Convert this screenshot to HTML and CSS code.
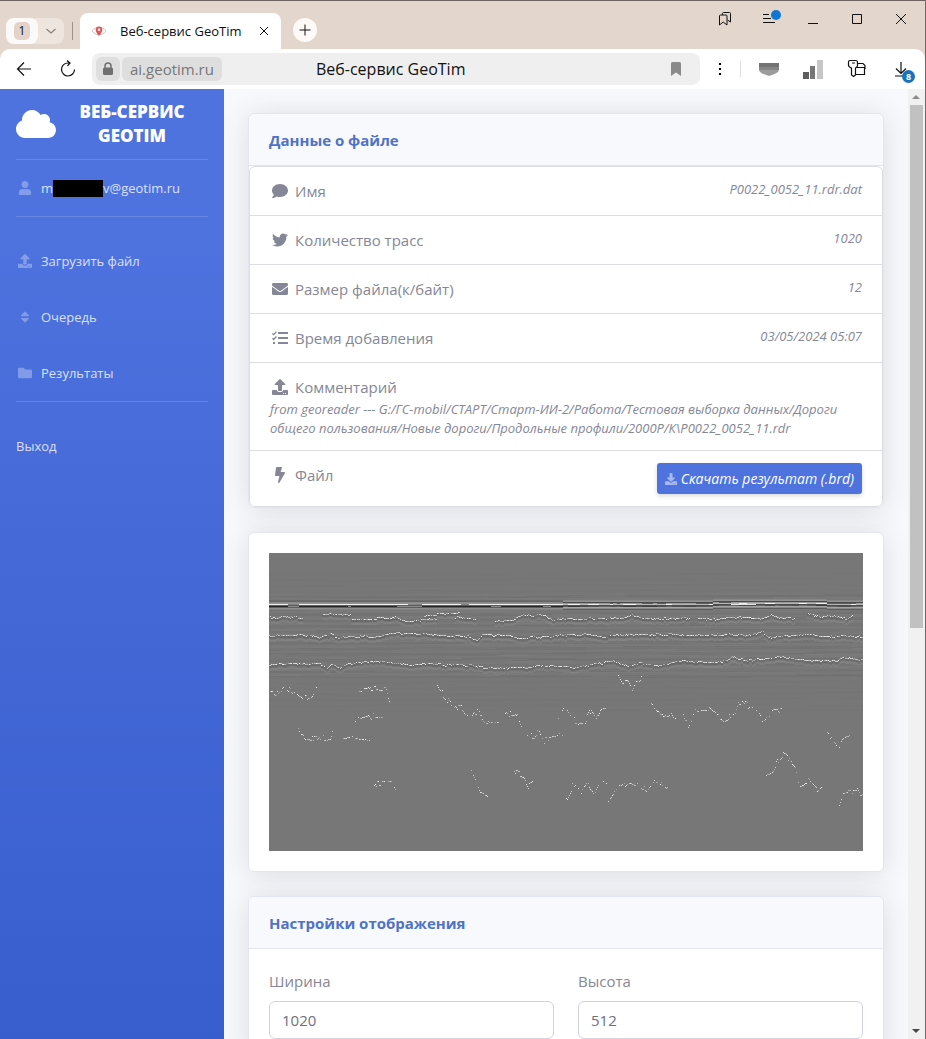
FILE: index.html
```html
<!DOCTYPE html>
<html lang="ru">
<head>
<meta charset="utf-8">
<title>Веб-сервис GeoTim</title>
<link rel="stylesheet" href="styles.css">
</head>
<body>
<svg class="sprite" aria-hidden="true">
  <symbol id="i-cloud" viewBox="0 0 640 512"><path d="M537.6 226.6c4.1-10.7 6.4-22.4 6.4-34.6 0-53-43-96-96-96-19.7 0-38.1 6-53.3 16.2C367 64.2 315.3 32 256 32c-88.4 0-160 71.6-160 160 0 2.7.1 5.4.2 8.1C40.2 219.8 0 273.2 0 336c0 79.5 64.5 144 144 144h368c70.7 0 128-57.3 128-128 0-61.9-44-113.6-102.4-125.4z"/></symbol>
  <symbol id="i-user" viewBox="0 0 448 512"><path d="M224 256c70.7 0 128-57.3 128-128S294.7 0 224 0 96 57.3 96 128s57.3 128 128 128zm89.6 32h-16.7c-22.2 10.2-46.9 16-72.9 16s-50.6-5.8-72.9-16h-16.7C60.2 288 0 348.2 0 422.4V464c0 26.5 21.5 48 48 48h352c26.5 0 48-21.5 48-48v-41.6c0-74.2-60.2-134.4-134.4-134.4z"/></symbol>
  <symbol id="i-upload" viewBox="0 0 512 512"><path d="M296 384h-80c-13.3 0-24-10.7-24-24V192h-87.7c-17.8 0-26.7-21.5-14.1-34.1L242.3 5.7c7.5-7.5 19.8-7.5 27.3 0l152.2 152.2c12.6 12.6 3.7 34.1-14.1 34.1H320v168c0 13.3-10.7 24-24 24zm216-8v112c0 13.3-10.7 24-24 24H24c-13.3 0-24-10.7-24-24V376c0-13.3 10.7-24 24-24h136v8c0 30.9 25.1 56 56 56h80c30.9 0 56-25.1 56-56v-8h136c13.3 0 24 10.7 24 24zm-124 88c0-11-9-20-20-20s-20 9-20 20 9 20 20 20 20-9 20-20zm64 0c0-11-9-20-20-20s-20 9-20 20 9 20 20 20 20-9 20-20z"/></symbol>
  <symbol id="i-download" viewBox="0 0 512 512"><path d="M216 0h80c13.3 0 24 10.7 24 24v168h87.7c17.8 0 26.7 21.5 14.1 34.1L269.7 378.3c-7.5 7.5-19.8 7.5-27.3 0L90.1 226.1c-12.6-12.6-3.7-34.1 14.1-34.1H192V24c0-13.3 10.7-24 24-24zm296 376v112c0 13.3-10.7 24-24 24H24c-13.3 0-24-10.7-24-24V376c0-13.3 10.7-24 24-24h146.7l49 49c20.1 20.1 52.5 20.1 72.6 0l49-49H488c13.3 0 24 10.7 24 24zm-124 88c0-11-9-20-20-20s-20 9-20 20 9 20 20 20 20-9 20-20zm64 0c0-11-9-20-20-20s-20 9-20 20 9 20 20 20 20-9 20-20z"/></symbol>
  <symbol id="i-sort" viewBox="0 0 320 512"><path d="M41 288h238c21.4 0 32.1 25.9 17 41L177 448c-9.4 9.4-24.6 9.4-33.9 0L24 329c-15.1-15.1-4.4-41 17-41zm255-105L177 64c-9.4-9.4-24.6-9.4-33.9 0L24 183c-15.1 15.1-4.4 41 17 41h238c21.4 0 32.1-25.9 17-41z"/></symbol>
  <symbol id="i-folder" viewBox="0 0 512 512"><path d="M464 128H272l-64-64H48C21.49 64 0 85.49 0 112v288c0 26.51 21.49 48 48 48h416c26.51 0 48-21.49 48-48V176c0-26.51-21.49-48-48-48z"/></symbol>
  <symbol id="i-comment" viewBox="0 0 512 512"><path d="M256 32C114.6 32 0 125.1 0 240c0 49.6 21.4 95 57 130.7C44.5 421.1 2.7 466 2.2 466.5c-2.2 2.3-2.8 5.7-1.5 8.7S4.8 480 8 480c66.3 0 116-31.8 140.6-51.4 32.7 12.3 69 19.4 107.4 19.4 141.4 0 256-93.1 256-208S397.4 32 256 32z"/></symbol>
  <symbol id="i-twitter" viewBox="0 0 512 512"><path d="M459.37 151.716c.325 4.548.325 9.097.325 13.645 0 138.72-105.583 298.558-298.558 298.558-59.452 0-114.68-17.219-161.137-47.106 8.447.974 16.568 1.299 25.34 1.299 49.055 0 94.213-16.568 130.274-44.832-46.132-.975-84.792-31.188-98.112-72.772 6.498.974 12.995 1.624 19.818 1.624 9.421 0 18.843-1.3 27.614-3.573-48.081-9.747-84.143-51.98-84.143-102.985v-1.299c13.969 7.797 30.214 12.67 47.431 13.319-28.264-18.843-46.781-51.005-46.781-87.391 0-19.492 5.197-37.36 14.294-52.954 51.655 63.675 129.3 105.258 216.365 109.807-1.624-7.797-2.599-15.918-2.599-24.04 0-57.828 46.782-104.934 104.934-104.934 30.213 0 57.502 12.67 76.67 33.137 23.715-4.548 46.456-13.32 66.599-25.34-7.798 24.366-24.366 44.833-46.132 57.827 21.117-2.273 41.584-8.122 60.426-16.243-14.292 20.791-32.161 39.308-52.628 54.253z"/></symbol>
  <symbol id="i-envelope" viewBox="0 0 512 512"><path d="M502.3 190.8c3.9-3.1 9.7-.2 9.7 4.7V400c0 26.5-21.5 48-48 48H48c-26.5 0-48-21.5-48-48V195.6c0-5 5.7-7.8 9.7-4.7 22.4 17.4 52.1 39.5 154.1 113.6 21.1 15.4 56.7 47.8 92.2 47.6 35.7.3 72-32.8 92.3-47.6 102-74.1 131.6-96.3 154-113.7zM256 320c23.2.4 56.6-29.2 73.4-41.4 132.7-96.3 142.8-104.7 173.4-128.7 5.8-4.5 9.2-11.5 9.2-18.9v-19c0-26.5-21.5-48-48-48H48c-26.5 0-48 21.5-48 48v19c0 7.4 3.4 14.3 9.2 18.9 30.6 23.9 40.7 32.4 173.4 128.7 16.8 12.2 50.2 41.8 73.4 41.4z"/></symbol>
  <symbol id="i-tasks" viewBox="0 0 16 16"><path d="M6 2h10v2H6zM6 7h10v2H6zM6 12h10v2H6zM1 12h2v2H1z"/><path d="M.4 3.4l1.3 1.2L4.4 1.600M.4 8.300l1.3 1.2L4.4 6.500" fill="none" stroke="currentColor" stroke-width="1.300"/></symbol>
  <symbol id="i-bolt" viewBox="0 0 320 512"><path d="M296 160H180.6l42.6-129.8C227.2 15 215.7 0 200 0H56C44 0 33.8 8.900 32.2 20.8l-32 240C-1.7 275.2 9.5 288 24 288h118.7L96.600 482.5c-3.6 15.2 8 29.5 23.3 29.5 8.4 0 16.4-4.4 20.8-12l176-304c9.3-15.9-2.2-36-20.7-36z"/></symbol>
</svg>

<div class="window">
  <header class="tabstrip">
    <div class="tab-group">
      <button class="tab-count" type="button"><span>1</span></button>
      <button class="tab-more" type="button" aria-label="Группы вкладок"><svg width="12" height="8" viewBox="0 0 12 8"><path d="M1.500 2l4.500 4 4.500-4" class="line muted"/></svg></button>
    </div>
    <span class="strip-sep"></span>
    <div class="tab">
      <svg width="16" height="12" viewBox="0 0 16 12"><path d="M1 6C4 1 12 1 15 6 12 11 4 11 1 6z" fill="#fbf7f7" stroke="#d8c6c4"/><path d="M8 11C5.500 8 4.700 6.300 4.700 4.700a3.300 3.300 0 0 1 6.600 0C11.300 6.300 10.500 8 8 11z" fill="#dd5a58"/><circle cx="8" cy="4.800" r="1.200" fill="#fff"/></svg>
      <span class="tab-title">Веб-сервис GeoTim</span>
      <button class="tab-close" type="button" aria-label="Закрыть вкладку"><svg width="10" height="10" viewBox="0 0 10 10"><path d="M1 1l8 8M9 1L1 9" class="line"/></svg></button>
    </div>
    <button class="new-tab" type="button" aria-label="Новая вкладка"><svg width="12" height="12" viewBox="0 0 12 12"><path d="M6 .5v11M.5 6h11" class="line"/></svg></button>
    <div class="win-buttons">
      <button type="button" aria-label="Коллекции"><svg width="14" height="16" viewBox="0 0 14 16"><path d="M1.500 5q0-1 1-1h5.500q1 0 1 1v9L5.200 11 1.500 14zM4.500 4V2.500q0-1 1-1h6q1 0 1 1v8.500L9.500 9" class="line"/></svg></button>
      <button class="has-dot" type="button" aria-label="Меню"><svg width="14" height="12" viewBox="0 0 14 12"><path d="M1 1.500h6M1 5.500h8M1 9.500h12" class="line"/></svg><span class="dot"></span></button>
      <button type="button" aria-label="Свернуть"><svg width="12" height="12" viewBox="0 0 12 12"><path d="M1 10.500h10" class="line"/></svg></button>
      <button type="button" aria-label="Развернуть"><svg width="12" height="12" viewBox="0 0 12 12"><path d="M1.500 1.500h9v9h-9z" class="line"/></svg></button>
      <button type="button" aria-label="Закрыть"><svg width="12" height="12" viewBox="0 0 12 12"><path d="M1 1l10 10M11 1L1 11" class="line"/></svg></button>
    </div>
  </header>

  <div class="toolbar">
    <button class="nav-btn" type="button" aria-label="Назад"><svg width="16" height="16" viewBox="0 0 16 16"><path d="M15 8H1.500M8 1.500L1.500 8 8 14.500" class="line strong"/></svg></button>
    <button class="nav-btn" type="button" aria-label="Обновить"><svg width="18" height="18" viewBox="0 0 18 18"><path d="M10.500 3H8.500A6.500 6.500 0 1 0 15.500 9.500M8 .5L11 3 8.500 5.800" class="line strong"/></svg></button>
    <div class="address">
      <span class="chip lock"><svg width="12" height="14" viewBox="0 0 12 14"><path d="M3 6V4a3 3 0 0 1 6 0v2" fill="none" stroke="#707070" stroke-width="1.500"/><rect x="1" y="5.500" width="10" height="7.500" rx="1.500" fill="#707070"/></svg></span>
      <span class="chip host">ai.geotim.ru</span>
      <span class="page-title">Веб-сервис GeoTim</span>
      <button class="bookmark" type="button" aria-label="В закладки"><svg width="10" height="14" viewBox="0 0 10 14"><path d="M0 1.500Q0 0 1.500 0h7Q10 0 10 1.500V14L5 10.500 0 14z" fill="#8a8a8a"/></svg></button>
    </div>
    <button class="nav-btn" type="button" aria-label="Ещё"><svg width="4" height="14" viewBox="0 0 4 14"><path d="M1 1h2v2H1zM1 6h2v2H1zM1 11h2v2H1z"/></svg></button>
    <span class="tool-sep"></span>
    <div class="extensions">
      <button type="button" aria-label="Защита"><svg width="20" height="14" viewBox="0 0 20 14"><path d="M0 1h20v4H0z" fill="#737373"/><path d="M0 5h20v3q0 3-10 6Q0 11 0 8z" fill="#9c9c9c"/><path d="M0 5h20v3H0z" fill="#868686"/></svg></button>
      <button type="button" aria-label="Статистика"><svg width="20" height="20" viewBox="0 0 20 20"><path d="M0 13h6v7H0z" fill="#5c5c5c"/><path d="M7 7h5v13H7z" fill="#777"/><path d="M14 1h6v19h-6z" fill="#c6c6c6"/></svg></button>
      <button type="button" aria-label="Пароли"><svg width="20" height="20" viewBox="0 0 20 20"><path d="M3 1.500h5.500q2 0 2 2v3q0 1.500-2 2.500v7L6.500 17.500 4.500 16V9q-3-1-3-3V3q0-1.500 1.500-1.500zM5 4h3M11 4.500h5l2 2v3.500M9 8.500h8.500v7H9" class="line strong"/></svg></button>
      <button class="downloads" type="button" aria-label="Загрузки"><svg width="14" height="16" viewBox="0 0 14 16"><path d="M7 1v11M2 7.500l5 5 5-5M1 15h8" class="line strong"/></svg><span class="badge">8</span></button>
    </div>
  </div>

  <div class="viewport">
    <nav class="sidebar">
      <a class="brand" href="#">
        <svg class="brand-icon"><use href="#i-cloud"/></svg>
        <span class="brand-text">Веб-сервис GeoTim</span>
      </a>
      <hr>
      <a class="nav-link" href="#"><svg class="nav-icon"><use href="#i-user"/></svg><span class="email">m<span class="mask"></span>v@geotim.ru</span></a>
      <hr class="wide">
      <a class="nav-link" href="#"><svg class="nav-icon"><use href="#i-upload"/></svg>Загрузить файл</a>
      <a class="nav-link" href="#"><svg class="nav-icon"><use href="#i-sort"/></svg>Очередь</a>
      <a class="nav-link" href="#"><svg class="nav-icon"><use href="#i-folder"/></svg>Результаты</a>
      <hr class="wide">
      <a class="nav-link" href="#">Выход</a>
    </nav>

    <main class="content">
      <section class="card">
        <h2 class="card-header">Данные о файле</h2>
        <ul class="file-info">
          <li><span class="name"><svg><use href="#i-comment"/></svg>Имя</span><em>P0022_0052_11.rdr.dat</em></li>
          <li><span class="name"><svg><use href="#i-twitter"/></svg>Количество трасс</span><em>1020</em></li>
          <li><span class="name"><svg><use href="#i-envelope"/></svg>Размер файла(к/байт)</span><em>12</em></li>
          <li><span class="name"><svg><use href="#i-tasks"/></svg>Время добавления</span><em>03/05/2024 05:07</em></li>
          <li class="stacked"><span class="name"><svg><use href="#i-upload"/></svg>Комментарий</span><em>from georeader --- G:/ГС-mobil/СТАРТ/Старт-ИИ-2/Работа/Тестовая выборка данных/Дороги общего пользования/Новые дороги/Продольные профили/2000Р/К\P0022_0052_11.rdr</em></li>
          <li><span class="name"><svg><use href="#i-bolt"/></svg>Файл</span><a class="download" href="#"><svg><use href="#i-download"/></svg>Скачать результат (.brd)</a></li>
        </ul>
      </section>

      <section class="card">
        <div class="card-body"><canvas class="radargram" width="594" height="298" role="img" aria-label="Радарограмма"></canvas></div>
      </section>

      <section class="card">
        <h2 class="card-header">Настройки отображения</h2>
        <form class="card-body settings">
          <div class="field"><label for="w">Ширина</label><input id="w" type="text" value="1020"></div>
          <div class="field"><label for="h">Высота</label><input id="h" type="text" value="512"></div>
        </form>
      </section>
    </main>

    <div class="scrollbar">
      <svg width="16" height="16" viewBox="0 0 16 16"><path d="M4 10l4-4 4 4z" fill="#8a8a8a"/></svg>
      <div class="track"><div class="thumb"></div></div>
      <svg width="16" height="16" viewBox="0 0 16 16"><path d="M4 6l4 4 4-4z" fill="#484848"/></svg>
    </div>
  </div>
</div>
<script src="radargram.js"></script>
</body>
</html>
```

FILE: styles.css
```css
* { box-sizing: border-box; }

body {
  margin: 0;
  font: 15px/24px "Open Sans", "Noto Sans", sans-serif;
  color: #858796;
}

button {
  display: flex;
  align-items: center;
  justify-content: center;
  padding: 0;
  border: 0;
  background: none;
  font: inherit;
  color: #111;
}

a { color: inherit; text-decoration: none; }

.sprite { position: absolute; width: 0; height: 0; }
.line { fill: none; stroke: #111; stroke-width: 1; }
.line.strong { stroke-width: 1.2; }
.line.muted { stroke: #8c7f78; stroke-width: 1.2; }

.window {
  display: flex;
  flex-direction: column;
  height: 100vh;
  overflow: hidden;
  border-top: 1px solid #6e625f;
  border-right: 1px solid #6e6866;
  background: #e3d6cc;
}

/* Tab strip */
.tabstrip {
  display: flex;
  align-items: flex-end;
  height: 48px;
  flex: none;
  padding: 0 2px 0 6px;
}
.tab-group {
  display: flex;
  width: 58px;
  height: 26px;
  margin-bottom: 5px;
  border-radius: 8px;
  background: #eee5de;
}
.tab-count { width: 32px; border-radius: 8px; background: #fcfaf8; }
.tab-count span {
  width: 16px;
  height: 18px;
  border-radius: 5px;
  background: #e3d3c8;
  font-size: 12px;
  line-height: 18px;
}
.tab-more { flex: 1; }
.strip-sep { width: 1px; height: 18px; margin: 0 7px 9px 8px; background: #a0958e; }
.tab {
  display: flex;
  align-items: center;
  width: 201px;
  height: 36px;
  padding: 0 10px 0 11px;
  border-radius: 8px 8px 0 0;
  background: #fff;
}
.tab-title { flex: 1; margin-left: 13px; font-size: 13px; color: #111; white-space: nowrap; }
.tab-close { width: 14px; height: 14px; }
.new-tab {
  width: 24px;
  height: 24px;
  margin: 0 0 7px 12px;
  border-radius: 50%;
  background: #fcf9f7;
}
.win-buttons { display: flex; align-self: flex-start; margin-left: auto; }
.win-buttons button { width: 44px; height: 36px; }
.has-dot { position: relative; }
.dot {
  position: absolute;
  top: 9px;
  right: 10px;
  width: 10px;
  height: 10px;
  border-radius: 50%;
  background: #0f78d4;
}

/* Toolbar */
.toolbar {
  display: flex;
  align-items: center;
  flex: none;
  height: 40px;
  padding: 0 2px 0 4px;
  border-radius: 10px 10px 0 0;
  background: #fff;
}
.nav-btn { width: 40px; height: 32px; }
.nav-btn + .nav-btn { margin: 0 4px; }
.address {
  display: flex;
  align-items: center;
  flex: 1;
  height: 32px;
  padding: 0 19px 0 4px;
  border-radius: 8px;
  background: #efefef;
}
.chip { height: 24px; border-radius: 6px; background: #dedede; }
.lock { display: grid; place-items: center; width: 24px; }
.host { margin-left: 2px; padding: 0 8px; font-size: 15px; color: #777; }
.page-title { flex: 1; margin-left: 94px; font-size: 16px; color: #111; }
.tool-sep { width: 1px; height: 16px; margin-right: 6px; background: #ddd; }
.extensions { display: flex; }
.extensions button { width: 44px; height: 32px; }
.downloads { position: relative; }
.badge {
  position: absolute;
  right: 8px;
  bottom: 2px;
  width: 13px;
  height: 13px;
  border-radius: 50%;
  background: #1a73b8;
  color: #fff;
  font-size: 9px;
  font-weight: 700;
  line-height: 13px;
}

/* Page */
.viewport { display: flex; flex: 1; min-height: 0; background: #f8f9fc; }

.sidebar {
  width: 224px;
  flex: none;
  overflow: hidden;
  background: linear-gradient(#4e73df 14%, #385dcd);
  color: rgba(255, 255, 255, .8);
}
.brand {
  display: flex;
  align-items: center;
  justify-content: space-between;
  height: 70px;
  padding: 0 16px;
  color: #fff;
}
.brand-icon { width: 40px; height: 32px; fill: currentColor; }
.brand-text {
  width: 152px;
  font-size: 17px;
  font-weight: 800;
  text-align: center;
  text-transform: uppercase;
}
hr { margin: 0 16px; border: 0; border-top: 1px solid rgba(255, 255, 255, .15); }
hr.wide { margin-bottom: 16px; }
.nav-link {
  display: flex;
  align-items: center;
  height: 56px;
  padding: 0 16px;
  font-size: 13px;
}
.nav-icon { width: 18px; height: 14px; margin-right: 7px; fill: currentColor; opacity: .38; }
.email { display: flex; align-items: center; }
.mask { width: 50px; height: 17px; background: #000; }

.content { flex: 1; min-width: 0; overflow: hidden; padding: 24px; }
.card {
  margin-bottom: 24px;
  border: 1px solid #e3e6f0;
  border-radius: 6px;
  background: #fff;
  box-shadow: 0 2px 28px rgba(58, 59, 69, .15);
}
.card-header {
  margin: 0;
  padding: 14px 20px 13px;
  border-bottom: 1px solid #e3e6f0;
  border-radius: 6px 6px 0 0;
  background: #f8f9fc;
  color: #4e73c6;
  font-size: 15px;
  font-weight: 700;
}
.card-body { padding: 20px; }

.file-info {
  margin: 0;
  padding: 0;
  list-style: none;
  border: 1px solid #dcdde2;
  border-radius: 6px;
}
.file-info li {
  display: flex;
  justify-content: space-between;
  padding: 12px 20px;
  border-bottom: 1px solid #dcdde2;
}
.file-info li:last-child { border-bottom: 0; }
.file-info li.stacked { display: block; }
.name { display: flex; align-items: center; height: 24px; }
.name svg { width: 20px; height: 16px; margin-right: 5px; fill: currentColor; }
.file-info em { display: block; padding-top: 1px; font-size: 13px; line-height: 19px; }

.download {
  display: flex;
  align-items: center;
  height: 31px;
  padding: 0 8px;
  border-radius: 3px;
  background: #4e73df;
  box-shadow: 0 2px 4px rgba(58, 59, 69, .2);
  color: #fff;
  font-size: 14px;
  font-style: italic;
}
.download svg { width: 12px; height: 12px; margin-right: 4px; fill: currentColor; opacity: .5; }

.radargram { display: block; width: 100%; background: #777; }

.settings { display: grid; grid-template-columns: 1fr 1fr; gap: 24px; }
.field label { display: block; margin-bottom: 8px; }
.field input {
  width: 100%;
  height: 38px;
  padding: 0 12px;
  border: 1px solid #d1d3e2;
  border-radius: 6px;
  background: #fff;
  color: #6e707e;
  font: inherit;
}

.scrollbar {
  display: flex;
  flex-direction: column;
  width: 17px;
  flex: none;
  background: #f1f1f1;
}
.track { flex: 1; padding: 0 2px; }
.thumb { height: 57%; background: #c1c1c1; }
```

FILE: radargram.js
```js
const canvas = document.querySelector('.radargram');
const ctx = canvas.getContext('2d');
const W = canvas.width;
const H = canvas.height;

let seed = 7;
function rnd() {
  seed = (seed * 16807) % 2147483647;
  return seed / 2147483647;
}

function shade(v, a) {
  return 'rgba(' + v + ',' + v + ',' + v + ',' + a + ')';
}

function depthAt(line, x) {
  for (let i = 1; i < line.length; i++) {
    const [x0, y0] = line[i - 1];
    const [x1, y1] = line[i];
    if (x <= x1) return y0 + (y1 - y0) * (x - x0) / (x1 - x0);
  }
  return line[line.length - 1][1];
}

// Picked horizons, [trace, depth]
const strong = [
  [[0,64],[34,64]], [[53,61],[82,61]],
  [[82,67],[104,65],[128,64],[134,67],[154,67],[168,65]],
  [[154,63],[168,61],[191,60]], [[186,64],[207,65]],
  [[226,68],[244,66],[254,62],[276,62],[284,67],[291,66],[328,65],[354,65],[363,62],[374,65],[421,65]],
  [[429,65],[441,66],[471,64],[491,65],[503,61],[511,64],[526,65]],
  [[538,60],[554,64],[564,62],[571,65],[579,65],[584,61]],
  [[0,82],[44,82],[50,85],[61,81],[69,84],[81,83],[104,83],[124,80],[154,80],[164,82],[198,83],[208,87],[213,82],[241,82],[251,85],[293,82],[316,81],[328,83],[358,82],[371,81],[396,81],[424,82],[463,81],[481,82],[493,78],[499,84],[538,81],[551,83],[594,83]],
  [[0,111],[24,110],[54,111],[58,115],[63,111],[71,115],[79,110],[98,108],[131,110],[139,112],[168,110],[178,112],[199,112],[213,114],[231,115],[258,114],[274,112],[304,114],[324,111],[344,108],[359,112],[371,109],[388,113],[394,111],[414,108],[448,109],[458,107],[463,103],[478,107],[494,106],[511,103],[528,107],[564,108],[578,104],[594,107]]
];
const weak = [
  [[0,139],[9,140],[16,134],[24,138],[34,145],[43,140],[48,129]],
  [[90,138],[106,136],[116,136],[121,153]],
  [[86,166],[99,162],[114,165]],
  [[29,176],[31,182],[44,185],[61,185],[64,177]],
  [[74,186],[101,185]],
  [[101,230],[104,234],[109,230],[123,230],[128,243]],
  [[168,132],[183,154],[193,155],[199,162],[208,158],[216,168],[224,168],[230,172]],
  [[236,160],[248,163],[258,181],[264,183],[269,177],[274,188],[281,184],[294,182]],
  [[288,167],[295,156],[301,164],[308,168],[316,167],[321,158],[327,167],[333,153],[338,153]],
  [[348,119],[353,130],[358,129],[363,137],[367,127],[375,125]],
  [[382,153],[391,163],[397,163],[402,159],[407,170]],
  [[414,161],[419,172],[424,161],[433,154],[439,154],[448,162],[455,166],[466,161],[469,150],[474,149],[488,158],[495,175]],
  [[495,167],[504,157],[513,158]],
  [[558,182],[569,193],[574,186],[581,185]],
  [[496,222],[501,220],[514,200],[526,212],[530,231],[538,227],[548,237],[553,232]],
  [[570,250],[574,238],[588,237],[594,244]],
  [[202,218],[206,227],[211,240],[219,243],[224,238]],
  [[245,218],[253,222],[259,232],[264,228]],
  [[297,245],[303,233],[313,239],[318,231],[325,239],[330,228],[339,231]],
  [[339,248],[348,235],[361,227],[378,237],[385,224],[401,238]]
];

ctx.fillStyle = '#777';
ctx.fillRect(0, 0, W, H);

// Faint horizontal banding that fades with depth
for (let y = 20; y < 160; y++) {
  const force = y > 40 && y < 125 ? 0.14 : 0.03;
  for (let x = 0; x < W;) {
    const len = 12 + Math.floor(rnd() * 50);
    ctx.fillStyle = shade(Math.sin(y * 1.1 + x * 0.004) > 0 ? 150 : 80, rnd() * force);
    ctx.fillRect(x, y, len, 1);
    x += len;
  }
}

// Direct wave
for (let x = 0; x < W;) {
  const len = 3 + Math.floor(rnd() * 12);
  const right = x > 290;
  const crest = x > 440 && x < 550 ? 1 : 0;
  const rows = right
    ? [[47, 135], [48, 150], [49, 70], [50, rnd() < 0.3 ? 90 : 160], [51, rnd() < 0.3 ? 255 : 190], [52, 70], [53, 50 + rnd() * 60], [54, 170], [55, 140], [56, 90]]
    : [[47, 105], [48, 100], [49, 140], [50, 150], [51, rnd() < 0.14 ? 130 : 255], [52, 90], [53, rnd() < 0.2 ? 140 : 30], [54, 90], [55, 145], [56, 130]];
  for (const [y, v] of rows) {
    ctx.fillStyle = shade(Math.round(v), 0.9);
    ctx.fillRect(x, y - crest, len, 1);
  }
  if (crest && x > 452 && x < 484) {
    ctx.fillStyle = shade(245, 0.9);
    ctx.fillRect(x, 51, len, rnd() < 0.5 ? 1 : 2);
  }
  x += len;
}

function drawPicks(line, jitter, density, shadow) {
  const end = Math.min(W, line[line.length - 1][0]);
  let drift = 0;
  for (let x = line[0][0]; x < end; x++) {
    if (rnd() < 0.4) drift = (rnd() - 0.5) * jitter;
    const y = Math.round(depthAt(line, x) + drift);
    if (shadow) {
      ctx.fillStyle = shade(70, 0.22);
      ctx.fillRect(x, y + 1, 1, 2);
      ctx.fillStyle = shade(165, 0.2);
      ctx.fillRect(x, y + 4, 1, 2);
    }
    if (rnd() < density) {
      ctx.fillStyle = shade(255, 0.3 + rnd() * 0.6);
      ctx.fillRect(x, y, 1, 1);
    }
  }
}

strong.forEach(line => drawPicks(line, 2, 0.85, true));
weak.forEach(line => drawPicks(line, 6, 0.7, false));
```
